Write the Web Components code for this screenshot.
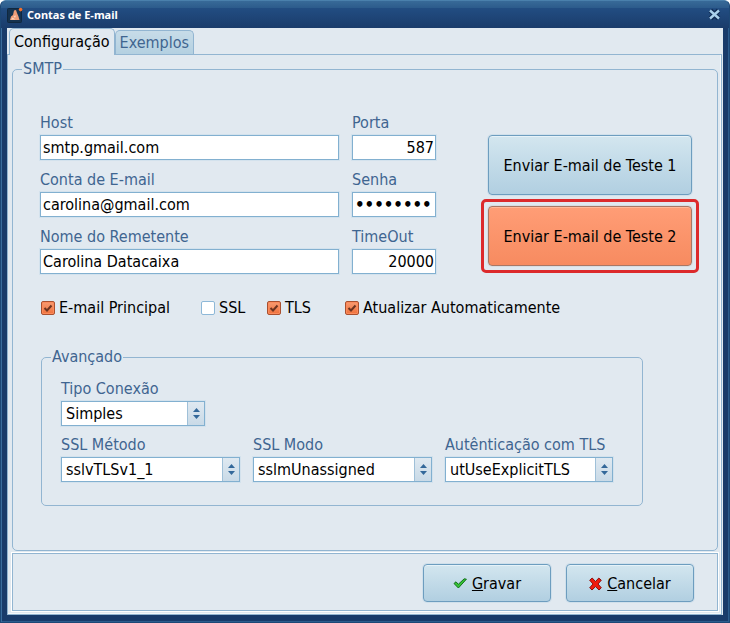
<!DOCTYPE html>
<html lang="pt-BR">
<head>
<meta charset="utf-8">
<title>Contas de E-mail</title>
<style>
  :root {
    --face: #e1e9f0;
    --line: #92b5d1;
    --label: #3f6590;
    font: 16px/20px "DejaVu Sans Condensed", "DejaVu Sans", sans-serif;
    color: #000;
  }
  body { margin: 0; }
  .form { display: flex; gap: 45px; padding: 34px 18px 0 27px; }
  .fields { flex: 1; min-width: 0; display: grid; grid-template-columns: 1fr 84px; gap: 10px 13px; }
  .tests { width: 218px; padding-top: 22px; display: grid; gap: 4px; align-content: start; }
  .tests > .plain { margin: 0 7px; }
  .checks { display: grid; grid-template-columns: 160px 66px 78px auto; padding: 24px 0 0 28px; }
  .advanced { margin: 29px 74px 0 28px; }
  .combos { display: grid; grid-template-columns: 1fr 1fr 168px; gap: 9px 13px; padding: 12px 29px 23px 19px; }
  .combos > :first-child { grid-column: 1 / -1; width: 144px; }
</style>
</head>
<body>
<app-window caption="Contas de E-mail">
  <tab-panel tabs="Configuração,Exemplos">
    <group-box class="main" caption="SMTP">
      <div class="form">
        <div class="fields">
          <text-field label="Host" value="smtp.gmail.com"></text-field>
          <text-field label="Porta" value="587" numeric></text-field>
          <text-field label="Conta de E-mail" value="carolina@gmail.com"></text-field>
          <text-field label="Senha" value="senha123" type="password"></text-field>
          <text-field label="Nome do Remetente" value="Carolina Datacaixa"></text-field>
          <text-field label="TimeOut" value="20000" numeric></text-field>
        </div>
        <div class="tests">
          <action-button class="plain" size="large">Enviar E-mail de Teste 1</action-button>
          <highlight-frame><action-button size="large" tone="hot">Enviar E-mail de Teste 2</action-button></highlight-frame>
        </div>
      </div>
      <div class="checks">
        <check-field label="E-mail Principal" checked></check-field>
        <check-field label="SSL"></check-field>
        <check-field label="TLS" checked></check-field>
        <check-field label="Atualizar Automaticamente" checked></check-field>
      </div>
      <group-box class="advanced" caption="Avançado">
        <div class="combos">
          <combo-field label="Tipo Conexão" value="Simples"></combo-field>
          <combo-field label="SSL Método" value="sslvTLSv1_1"></combo-field>
          <combo-field label="SSL Modo" value="sslmUnassigned"></combo-field>
          <combo-field label="Autênticação com TLS" value="utUseExplicitTLS"></combo-field>
        </div>
      </group-box>
    </group-box>
    <button-bar slot="footer">
      <action-button>
        <svg slot="icon" width="14" height="11" viewBox="0 0 14 11"><path d="M1 5.5 3 3.8 5.3 6.3 11.2 .8 13.4 1.2 5.4 10z" fill="#35c335" stroke="#14701c"/></svg>
        <u>G</u>ravar
      </action-button>
      <action-button>
        <svg slot="icon" width="13" height="14" viewBox="0 0 13 14"><path d="M3.2 1 6.5 4.5 9.8 1 12.3 3.2 9 7 12.3 10.8 10 13 6.5 9.6 3 13 .7 10.8 4 7 .7 3.2z" fill="#f0190c" stroke="#8e100c"/></svg>
        <u>C</u>ancelar
      </action-button>
    </button-bar>
  </tab-panel>
</app-window>
<script>
  const define = (name, render) => customElements.define(name, class extends HTMLElement {
    connectedCallback() {
      if (this.shadowRoot) return;
      const attr = key => this.getAttribute(key) ?? '';
      this.attachShadow({ mode: 'open' }).innerHTML =
        '<style>*{box-sizing:border-box}:host{display:block;min-width:0}button,input,select{font:inherit;color:inherit;margin:0}</style>' + render(attr, this);
    }
  });

  define('app-window', attr => `
    <style>
      :host { display: flex; flex-direction: column; min-height: 100vh; box-sizing: border-box;
        border: 1px solid #1d4876; border-top-color: #4a80ac; border-radius: 6px 6px 0 0; background: #193b6a;
        box-shadow: inset 1px 0 #3a6c9c, inset -1px -1px #2c5c8c; padding: 0 6px 7px; }
      header { height: 27px; margin: 0 -6px; padding: 0 7px 0 6px; display: flex; align-items: center; gap: 4px;
        color: #fff; font: bold 11px/16px "Noto Sans", sans-serif; border-radius: 5px 5px 0 0;
        background: linear-gradient(#386a98, #2c5b8b 7px, #22508200 7px), linear-gradient(#25538a, #1a3c6b); }
      h1 { flex: 1; margin: 0; font: inherit; }
      button { border: 0; padding: 0; width: 14px; height: 14px; background: none; }
      svg { display: block; }
    </style>
    <header>
      <svg width="16" height="16" viewBox="0 0 16 16"><rect x=".5" y="1.5" width="14" height="14" rx="1" fill="#15324f" stroke="#10283f"/><path d="M7 3.5 9 3 10 6 11.5 9.5 12.5 13H3L4 9.5 6 8z" fill="#ee9c78"/><path d="M6.5 9 9 8.5 8 11zM4 12.5H8.5L5.5 10.5z" fill="#ffd5bd"/><circle cx="13.6" cy="2.6" r="1.8" fill="#f5702b"/></svg>
      <h1>${attr('caption')}</h1>
      <button aria-label="Fechar"><svg width="14" height="14" viewBox="0 0 14 14"><path d="M2.5 2.5 10.5 10.5M10.5 2.5 2.5 10.5" stroke="#0f2b52" stroke-width="5"/><path d="M2 2.5 11 10.5M11 2.5 2 10.5" stroke="#a9d1ec" stroke-width="2.4"/></svg></button>
    </header>
    <slot></slot>`);

  define('tab-panel', attr => `
    <style>
      :host { flex: 1; display: flex; flex-direction: column; background: var(--face); }
      nav { display: flex; align-items: flex-end; height: 26px; padding-left: 2px; }
      button { height: 24px; padding: 0 4px; border: 1px solid var(--line); border-bottom: 0; border-radius: 5px 5px 0 0;
        background: linear-gradient(#c7dce8, #b4d0e1); color: var(--label); line-height: 22px; white-space: nowrap; }
      button[aria-selected=true] { height: 27px; margin-bottom: -1px; background: var(--face); color: #000; z-index: 1; line-height: 24px; }
      section { flex: 1; display: flex; flex-direction: column; gap: 2px; border: 1px solid var(--line);
        box-shadow: inset -1px -1px #f4f8fb; margin-right: 1px; padding: 4px 3px 3px 4px; }
    </style>
    <nav role="tablist">${attr('tabs').split(',').map((t, i) => `<button role="tab" aria-selected="${i === 0}">${t}</button>`).join('')}</nav>
    <section role="tabpanel"><slot></slot><slot name="footer"></slot></section>`);

  define('group-box', attr => `
    <style>
      :host { display: flex; flex-direction: column; }
      :host(.main) { flex: 1; }
      fieldset { flex: 1; margin: 0; padding: 0; min-width: 0; border: 1px solid var(--line); border-radius: 5px; }
      legend { margin-left: 9px; padding: 0 1px; color: var(--label); }
    </style>
    <fieldset><legend>${attr('caption')}</legend><slot></slot></fieldset>`);

  define('text-field', attr => `
    <style>
      label { display: block; margin-bottom: 2px; color: var(--label); white-space: nowrap; }
      input { display: block; width: 100%; height: 25px; padding: 0 2px; border: 1px solid #82b0d0; border-radius: 0; background: #fff;
        outline: 1px solid #d3e2ed; }
      :host([numeric]) input { text-align: right; padding-right: 1px; }
      input[type=password] { font: bold 15px "DejaVu Sans", sans-serif; }
    </style>
    <label for="f">${attr('label')}</label>
    <input id="f" type="${attr('type') || 'text'}" value="${attr('value')}">`);

  define('combo-field', attr => `
    <style>
      label { display: block; margin-bottom: 2px; color: var(--label); white-space: nowrap; }
      div { display: grid; grid-template-columns: 1fr 17px; height: 25px; border: 1px solid #82b0d0; outline: 1px solid #d3e2ed; background: #fff; }
      select { grid-area: 1 / 1 / 2 / 3; width: 100%; appearance: none; border: 0; padding: 0 19px 0 4px; background: none; }
      span { grid-area: 1 / 2; display: grid; place-items: center; border-left: 1px solid #9fc0d8; pointer-events: none;
        background: linear-gradient(#dfe9f1, #c9dae7); }
    </style>
    <label for="c">${attr('label')}</label>
    <div><select id="c"><option>${attr('value')}</option></select>
      <span><svg width="7" height="11" viewBox="0 0 7 11"><path d="M3.5 0 7 4H0zM0 7H7L3.5 11z" fill="#33689a"/></svg></span></div>`);

  define('check-field', (attr, el) => `
    <style>
      label { display: flex; align-items: center; gap: 4px; white-space: nowrap; }
      span { display: grid; }
      input { grid-area: 1 / 1; appearance: none; width: 14px; height: 14px; border: 1px solid #8db8d8; border-radius: 2px; background: #fff; }
      input:checked { border-color: #a9502f; background: linear-gradient(#f79b72, #f0713c); box-shadow: inset 0 0 0 1px #fb8b5c; }
      svg { grid-area: 1 / 1; pointer-events: none; visibility: hidden; }
      input:checked + svg { visibility: visible; }
    </style>
    <label><span><input type="checkbox"${el.hasAttribute('checked') ? ' checked' : ''}><svg width="14" height="14" viewBox="0 0 14 14"><path d="M3.5 7 6 9.5 10.5 4.5" fill="none" stroke="#6d3420" stroke-width="2"/></svg></span>${attr('label')}</label>`);

  define('action-button', attr => `
    <style>
      button { display: flex; align-items: center; justify-content: center; gap: 5px; width: 100%; min-width: 128px;
        height: ${attr('size') === 'large' ? 60 : 38}px; padding: 1px 0 0; white-space: nowrap;
        border: 1px solid #6d9dbf; border-radius: 4px; background: linear-gradient(#d3e6ef, #b1cfe1);
        box-shadow: inset 0 1px #e6f2f8, 0 0 0 1px #d0e0eb; }
      :host([tone=hot]) button { border-color: #a87765; background: linear-gradient(#ff9d76, #f78b60);
        box-shadow: inset 0 1px #ffb797, 0 0 0 1px #d8dde2; }
    </style>
    <button type="button"><slot name="icon"></slot><span><slot></slot></span></button>`);

  define('highlight-frame', () => `
    <style>:host { border: 3px solid #dc2a2c; border-radius: 5px; padding: 4px; }</style><slot></slot>`);

  define('button-bar', () => `
    <style>
      :host { display: flex; justify-content: flex-end; gap: 15px; padding: 10px 23px 8px;
        border: 1px solid var(--line); outline: 1px solid #fff; }
    </style>
    <slot></slot>`);
</script>
</body>
</html>
